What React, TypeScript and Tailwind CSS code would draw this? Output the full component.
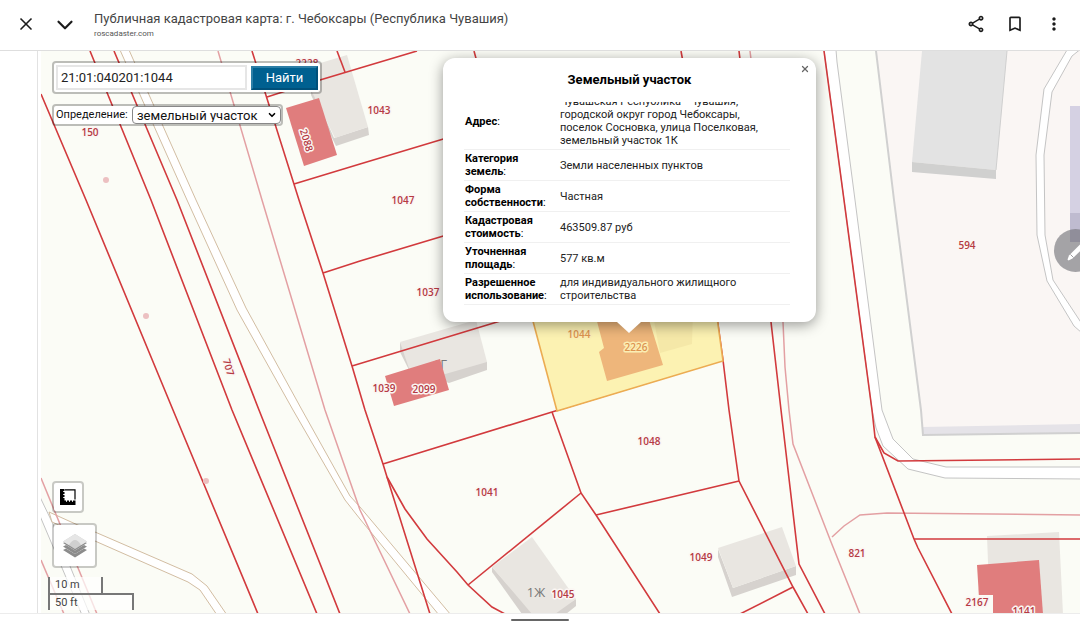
import { useState } from 'react';
import { ChevronDown, X } from 'lucide-react';
import { MdBookmarkBorder, MdMoreVert, MdOutlineShare } from 'react-icons/md';

interface MapLabel {
  text: string;
  x: number;
  y: number;
  rotate?: number;
}

interface InfoRow {
  name: string;
  value: string;
}

const infoRows: InfoRow[] = [
  { name: 'Адрес', value: 'Чувашская Республика - Чувашия, городской округ город Чебоксары, поселок Сосновка, улица Поселковая, земельный участок 1К' },
  { name: 'Категория земель', value: 'Земли населенных пунктов' },
  { name: 'Форма собственности', value: 'Частная' },
  { name: 'Кадастровая стоимость', value: '463509.87 руб' },
  { name: 'Уточненная площадь', value: '577 кв.м' },
  { name: 'Разрешенное использование', value: 'для индивидуального жилищного строительства' },
];

const parcelLines = [
  '41,94 86,200 173,410 258,614',
  '90,51 151,200 232,410 317,614',
  '114,51 177,200 259,410 340,614',
  '252,51 299,200 323,273 352,366 365,410 383,464 387,477 430,614',
  '387,477 405,509 427,539 457,572 468,585 492,607 505,614',
  '267,97 320,80 360,68 417,51',
  '337,51 345,72',
  '294,184 360,164 460,134',
  '323,273 360,261 460,231',
  '352,366 497,322 540,309',
  '383,464 552,412 723,360',
  '552,412 581,493 596,515 660,614',
  '581,493 468,585',
  '596,515 739,481',
  '716,310 723,360 729,410 739,481 793,587 808,614',
  '793,587 740,614',
  '739,51 771,322 781,410 799,564 825,614',
  '474,51 477,62',
  '681,51 683,62',
  '824,51 844,200 872,410 875,437 914,539 918,548 952,614',
  '875,437 884,453 898,461 1080,459',
  '914,539 1080,539',
];

const faintLines = [
  '218,51 262,200 325,410 360,510 410,614',
  '750,51 783,322 785,367 789,410 793,444 831,542 860,614',
  '832,537 844,526 860,515 887,513 1080,515',
  '41,478 97,614',
  '41,560 64,614',
];

const parcelLabels: MapLabel[] = [
  { text: '150', x: 90, y: 132 },
  { text: '2228', x: 307, y: 63 },
  { text: '2088', x: 307, y: 140, rotate: 73 },
  { text: '1043', x: 379, y: 110 },
  { text: '1047', x: 403, y: 200 },
  { text: '1037', x: 428, y: 292 },
  { text: '1039', x: 384, y: 388 },
  { text: '2099', x: 424, y: 389 },
  { text: '707', x: 229, y: 367, rotate: 73 },
  { text: '1048', x: 649, y: 441 },
  { text: '1041', x: 487, y: 492 },
  { text: '1049', x: 701, y: 557 },
  { text: '1045', x: 563, y: 594 },
  { text: '594', x: 967, y: 245 },
  { text: '821', x: 857, y: 553 },
  { text: '2167', x: 977, y: 602 },
  { text: '1141', x: 1024, y: 611 },
];

const selectedLabels: MapLabel[] = [
  { text: '1044', x: 579, y: 334 },
  { text: '2226', x: 636, y: 347 },
];

const Labels = ({ items, fill, halo }: { items: MapLabel[]; fill: string; halo: string }) => (
  <g
    fill={fill}
    stroke={halo}
    strokeWidth="3"
    strokeLinejoin="round"
    paintOrder="stroke"
    textAnchor="middle"
    dominantBaseline="central"
    className="font-['Open_Sans',sans-serif] text-[10px] font-semibold"
  >
    {items.map((label) => (
      <text key={label.text} x={label.x} y={label.y} transform={`rotate(${label.rotate ?? 0} ${label.x} ${label.y})`}>
        {label.text}
      </text>
    ))}
  </g>
);

const CadastralMap = () => (
  <svg className="absolute inset-0 h-full w-full" viewBox="41 51 1039 562" preserveAspectRatio="xMinYMin slice" aria-label="Кадастровая карта">
    <rect x="41" y="51" width="1039" height="562" fill="#fbfcf6" />

    {/* Industrial lot */}
    <polygon points="876,51 1080,51 1080,433 923,435" fill="#faf6f4" />
    <polygon points="922,427 1080,424 1080,433 923,435" fill="#e5e3e8" />
    <polyline points="876,51 894,200 921,410 923,435 1080,433" fill="none" stroke="#d0d0d0" strokeWidth="2" />
    <polygon points="922,51 1007,51 996,170 912,162" fill="#e3e3e3" />
    <polygon points="912,162 996,170 996,179 912,172" fill="#d0d0cf" />
    <polyline points="1007,51 996,170" fill="none" stroke="#cfcfcf" />

    {/* Paved roads */}
    <g stroke="#c4c4c4" strokeWidth="1">
      <polygon points="1067,50 1044,89 1036,155 1037,235 1047,281 1074,326 1082,333 1082,324 1053,280 1045,235 1044,155 1052,92 1072,56 1082,48" fill="#fff" />
      <polygon
        points="824,50 844,200 872,410 876,428 883,446 908,469 945,478 1082,479 1082,467 946,467 913,459 893,439 882,410 855,200 837,62 836,50"
        fill="#fff"
      />
    </g>
    <rect x="1070" y="106" width="12" height="107" fill="#d5d1e3" />
    <rect x="1070" y="213" width="12" height="29" fill="#bfbbd0" />

    {/* Field tracks */}
    <polygon points="40,497 52,522 90,615 82,615 40,516" fill="#fff" stroke="#c4c4c4" />
    <g fill="#fff" stroke="#d2bda2" strokeWidth="1">
      <polygon points="120,50 187,200 237,310 293,410 345,500 360,519 439,615 451,615 360,507 350,496 302,410 246,308 196,200 129,50" />
      <polygon points="49,512 80,526 95,532 192,574 207,586 227,615 217,615 200,590 188,582 95,541 52,522" />
    </g>

    {/* Houses */}
    <g fill="#d6d2ce">
      <polygon points="311,86 334,138 368,127 369,135 336,146 311,95" />
      <polygon points="400,343 487,362 487,370 449,383 409,370 400,352" />
      <polygon points="492,567 534,614 522,614 492,572" />
      <polygon points="576,599 576,606 566,614 550,614" />
      <polygon points="718,549 733,588 796,566 796,575 732,597 718,557" />
    </g>
    <g fill="#e9e6e1">
      <polygon points="314,65 347,55 368,127 335,138 311,90" />
      <polygon points="400,342 476,320 487,362 414,383" />
      <polygon points="532,537 576,599 555,614 532,614 492,567" />
      <polygon points="718,548 782,527 796,566 733,588" />
      <polygon points="987,536 1059,532 1063,614 990,614" />
    </g>
    <g className="font-['Open_Sans',sans-serif] text-[13px]" fill="#777" textAnchor="middle" dominantBaseline="central">
      <text x="440" y="364">1Г</text>
      <text x="536" y="592">1Ж</text>
    </g>
    <g fill="#e07d7d">
      <polygon points="286,108 319,98 337,155 304,166" />
      <polygon points="385,376 440,359 449,390 394,406" />
      <polygon points="977,565 1039,560 1043,614 980,614" />
    </g>
    <rect x="964" y="595" width="29" height="19" fill="#fbfcf6" />

    {/* Parcel borders */}
    <g fill="none" stroke="#e3a0a3" strokeWidth="1.5">
      {faintLines.map((points) => (
        <polyline key={points} points={points} />
      ))}
    </g>
    <g fill="none" stroke="#d23a3d" strokeWidth="1.6">
      {parcelLines.map((points) => (
        <polyline key={points} points={points} />
      ))}
    </g>
    <g fill="#ecc0c1">
      <circle cx="106" cy="180" r="3" />
      <circle cx="146" cy="316" r="3" />
      <circle cx="206" cy="481" r="3" />
    </g>

    {/* Selected parcel */}
    <polygon points="530,310 557,411 723,361 716,310" fill="#fcf2b2" stroke="#ecac52" strokeWidth="1.6" />
    <polygon points="652,310 693,310 692,344 660,353" fill="#f5e8a8" />
    <polygon points="594,310 604,348 599,352 607,381 663,365 646,310" fill="#eeb67b" />

    <Labels items={parcelLabels} fill="#b53a44" halo="#fbf6f3" />
    <Labels items={selectedLabels} fill="#dd9350" halo="#fbeeb4" />
  </svg>
);

const SearchPanel = () => {
  const [number, setNumber] = useState('21:01:040201:1044');

  return (
    <div className="flex flex-col items-start gap-2.5">
      <form
        className="flex h-[33px] items-center gap-1 rounded border-2 border-black/25 bg-white bg-clip-padding px-0.5"
        onSubmit={(e) => e.preventDefault()}
      >
        <input
          aria-label="Кадастровый номер"
          className="h-[25px] w-[191px] border-2 border-[#e6e6e6] bg-white px-[3px] text-[13px] text-[#222] outline-none"
          value={number}
          onChange={(e) => setNumber(e.target.value)}
        />
        <button type="submit" className="h-6 w-[67px] border-2 border-t-[#2c7ea6] border-r-[#00507a] border-b-[#00507a] border-l-[#2c7ea6] bg-[#006090] text-[13px] leading-none text-white">
          Найти
        </button>
      </form>
      <div className="flex h-[22px] items-center rounded border-2 border-black/25 bg-white bg-clip-padding pl-0.5">
        <label htmlFor="kind" className="w-[76px] text-[11px] whitespace-nowrap text-[#111]">Определение:</label>
        <div className="relative">
          <select id="kind" className="block h-[18px] w-[149px] appearance-none rounded-sm border border-[#888] bg-white px-1 text-[13px] leading-none text-[#111]">
            <option>земельный участок</option>
            <option>объект капитального строительства</option>
          </select>
          <ChevronDown className="pointer-events-none absolute top-1 right-1 size-2.5 text-black" strokeWidth={4} />
        </div>
      </div>
    </div>
  );
};

const MapTools = () => (
  <div className="flex flex-col items-start">
    <button aria-label="Измерить" className="flex size-8 items-center justify-center rounded border-2 border-black/20 bg-white bg-clip-padding">
      <svg width="16" height="16" viewBox="0 0 16 16">
        <path d="M0 0H4.5V11.5H15.5V16H0Z" fill="#000" />
        <path d="M5 .8H15V10.5" fill="none" stroke="#000" strokeWidth="1.2" />
        <path d="M3.2 2.5H5M3.2 5.5H5M3.2 8.5H5M6.5 11V12.8M9.5 11V12.8M12.5 11V12.8" stroke="#fff" strokeWidth="1" />
      </svg>
    </button>
    <button aria-label="Слои" className="mt-2.5 flex size-[45px] items-center justify-center rounded border-2 border-black/20 bg-white bg-clip-padding">
      <svg width="26" height="26" viewBox="0 0 26 26">
        <path d="M1 17L13 24.5L25 17L22 15.5L13 21L4 15.5Z" fill="#8c8c8c" />
        <path d="M1 13.5L13 21L25 13.5L22 12L13 17.5L4 12Z" fill="#8c8c8c" />
        <path d="M1 10L13 17.5L25 10L22 8.5L13 14L4 8.5Z" fill="#8c8c8c" />
        <path d="M1 8.5L13 16L25 8.5L13 1Z" fill="#cfcfcf" />
        <path d="M1 8.5L13 1L25 8.5L19 12Q13 2 7 12Z" fill="#e6e6e6" />
      </svg>
    </button>
    <div className="mt-[9px] -ml-1 text-[11px] leading-[15px] text-[#444]">
      <div className="h-4 w-[55px] border-x-2 border-[#777] bg-white/70 pl-[5px]">10 m</div>
      <div className="w-[86px] border-2 border-b-0 border-[#777] bg-white/70 pl-[5px]">50 ft</div>
    </div>
  </div>
);

const ParcelPopup = () => (
  <section className="absolute top-[7px] left-[402px] w-[373px] rounded-xl bg-white pt-3 pb-[15px] shadow-[0_3px_14px_rgba(0,0,0,0.4)]">
    <button aria-label="Закрыть" className="absolute top-1.5 right-1.5 text-[#666]">
      <X className="size-2.5" strokeWidth={3} />
    </button>
    <h2 className="mb-3 text-center text-[13px] leading-5 font-bold text-black">Земельный участок</h2>
    <div className="mx-[21px] h-[205px] overflow-hidden">
      <table className="-mt-[9px] w-[326px] table-fixed text-left text-[11px] leading-[13px]">
        <tbody>
          {infoRows.map((row) => (
            <tr key={row.name} className="border-b border-[#f0f0f0]">
              <th scope="row" className="w-24 py-0.5 pr-1 pl-px align-middle font-bold text-black">
                {row.name}<span className="font-normal">:</span>
              </th>
              <td className="py-0.5 pr-4 align-middle text-[#222]">{row.value}</td>
            </tr>
          ))}
        </tbody>
      </table>
    </div>
    <svg className="absolute top-full left-[174px]" width="24" height="11" viewBox="0 0 24 11">
      <path d="M0 0H24L12 11Z" fill="#fff" />
    </svg>
  </section>
);

const App = () => {
  return (
    <div className="flex h-screen flex-col overflow-hidden bg-white font-[Roboto,sans-serif]">
      <header className="flex h-[51px] shrink-0 items-start border-b border-[#dedede] px-4">
        <button aria-label="Закрыть вкладку" className="mt-3.5 text-[#1c1c1c]">
          <X className="size-5" strokeWidth={2} />
        </button>
        <button aria-label="Свернуть" className="mt-3 ml-4 text-[#1c1c1c]">
          <ChevronDown className="size-[26px]" strokeWidth={2} />
        </button>
        <div className="mt-2.5 ml-4 flex-1">
          <h1 className="text-[13px] leading-[17px] text-[#444]">Публичная кадастровая карта: г. Чебоксары (Республика Чувашия)</h1>
          <p className="text-[8px] leading-[14px] text-[#555]">roscadaster.com</p>
        </div>
        <div className="mt-3.5 flex gap-[19px] text-[#1c1c1c]">
          <button aria-label="Поделиться"><MdOutlineShare size={20} /></button>
          <button aria-label="Закладка"><MdBookmarkBorder size={20} /></button>
          <button aria-label="Меню"><MdMoreVert size={20} /></button>
        </div>
      </header>

      <main className="ml-[37px] flex-1 border-l border-[#e2e2e2] pl-[3px]">
        <div className="relative h-full overflow-hidden">
          <CadastralMap />
          <div className="absolute inset-y-0 left-[11px] flex flex-col justify-between pt-2.5 pb-[3px]">
            <SearchPanel />
            <MapTools />
          </div>
          <ParcelPopup />
          <button aria-label="Редактировать" className="absolute top-[178px] -right-[17px] flex size-[43px] items-center justify-center rounded-full bg-[#77777c]/65 text-white">
            <svg width="24" height="24" viewBox="0 0 24 24" fill="currentColor">
              <path d="M3.5 20.5L5 16.5L19 2.5L22.5 6L8.5 19.5L4.5 21.5Z" />
              <path d="M6.5 15.5L9.5 18.5" stroke="#9d9c9f" strokeWidth="1" />
            </svg>
          </button>
        </div>
      </main>

      <footer className="flex h-3.5 shrink-0 justify-center border-t border-[#ececec] pt-[5px]">
        <div className="h-0.5 w-[58px] rounded bg-[#666]" />
      </footer>
    </div>
  );
};

export default App;
